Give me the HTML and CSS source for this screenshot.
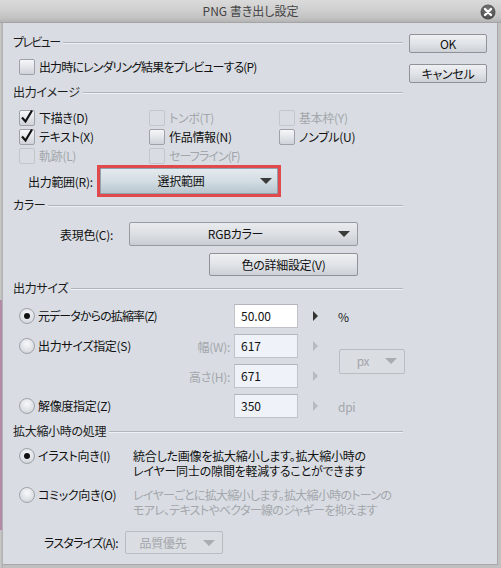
FILE: index.html
```html
<!DOCTYPE html>
<html lang="ja">
<head>
<meta charset="utf-8">
<title>PNG 書き出し設定</title>
<link rel="stylesheet" href="styles.css">
</head>
<body>
<div class="desk-strip"></div>
<div class="window">
  <div class="titlebar">
    <span class="title">PNG 書き出し設定</span>
    <span class="close">
      <svg width="16" height="16" viewBox="0 0 16 16">
        <defs>
          <radialGradient id="closeFill" cx="50%" cy="35%" r="65%">
            <stop offset="0" stop-color="#7a7a7a"/>
            <stop offset="1" stop-color="#4a4a4a"/>
          </radialGradient>
        </defs>
        <circle cx="8" cy="8" r="7.5" fill="url(#closeFill)"/>
        <path d="M5 5 L11 11 M11 5 L5 11" stroke="#fff" stroke-width="2.4" stroke-linecap="round"/>
      </svg>
    </span>
  </div>

  <div class="client">
    <div class="form">
      <div class="group-head tight-head"><span>プレビュー</span></div>
      <div class="check preview-row"><span class="box"></span><span class="narrow">出力時にレンダリング結果をプレビューする(P)</span></div>

      <div class="group-head gap-7"><span>出力イメージ</span></div>
      <div class="check-grid">
        <div class="check"><span class="box checked"><svg width="16" height="16" viewBox="0 0 16 16"><path d="M3 8.5 L6.5 12.5 L13 1.5" fill="none" stroke="#111" stroke-width="2.2"/></svg></span><span>下描き(D)</span></div>
        <div class="check disabled"><span class="box"></span><span>トンボ(T)</span></div>
        <div class="check disabled"><span class="box"></span><span>基本枠(Y)</span></div>
        <div class="check"><span class="box checked"><svg width="16" height="16" viewBox="0 0 16 16"><path d="M3 8.5 L6.5 12.5 L13 1.5" fill="none" stroke="#111" stroke-width="2.2"/></svg></span><span>テキスト(X)</span></div>
        <div class="check"><span class="box"></span><span>作品情報(N)</span></div>
        <div class="check"><span class="box"></span><span>ノンブル(U)</span></div>
        <div class="check disabled"><span class="box"></span><span>軌跡(L)</span></div>
        <div class="check disabled"><span class="box"></span><span class="narrow">セーフライン(F)</span></div>
      </div>

      <div class="range-row">
        <span class="range-label">出力範囲(R):</span>
        <div class="focus-ring">
          <div class="select focused"><span class="select-text">選択範囲</span><span class="arrow-down"></span></div>
        </div>
      </div>

      <div class="group-head"><span>カラー</span></div>
      <div class="color-row">
        <span class="color-label">表現色(C):</span>
        <div class="select color-select"><span class="select-text">RGBカラー</span><span class="arrow-down"></span></div>
      </div>
      <div class="btn detail-btn">色の詳細設定(V)</div>

      <div class="group-head gap-4"><span>出力サイズ</span></div>
      <div class="size-grid">
        <div class="radio"><span class="dot checked"></span><span class="narrow">元データからの拡縮率(Z)</span></div>
        <span class="field-label"></span>
        <div class="num">50.00</div>
        <span class="spin"><span class="arrow-right"></span></span>
        <span class="unit">%</span>

        <div class="radio"><span class="dot"></span><span>出力サイズ指定(S)</span></div>
        <span class="field-label">幅(W):</span>
        <div class="num disabled">617</div>
        <span class="spin off"><span class="arrow-right"></span></span>
        <div class="select disabled unit-select"><span class="select-text">px</span><span class="arrow-down"></span></div>

        <span class="radio-empty"></span>
        <span class="field-label">高さ(H):</span>
        <div class="num disabled">671</div>
        <span class="spin off"><span class="arrow-right"></span></span>

        <div class="radio"><span class="dot"></span><span>解像度指定(Z)</span></div>
        <span class="field-label"></span>
        <div class="num disabled">350</div>
        <span class="spin off"><span class="arrow-right"></span></span>
        <span class="unit muted">dpi</span>
      </div>

      <div class="group-head gap-5"><span>拡大縮小時の処理</span></div>
      <div class="scale-grid">
        <div class="radio"><span class="dot checked"></span><span>イラスト向き(I)</span></div>
        <p class="desc">統合した画像を拡大縮小します。拡大縮小時の<br>レイヤー同士の隙間を軽減することができます</p>
        <div class="radio"><span class="dot"></span><span>コミック向き(O)</span></div>
        <p class="desc muted">レイヤーごとに拡大縮小します。拡大縮小時のトーンの<br>モアレ、テキストやベクター線のジャギーを抑えます</p>
      </div>

      <div class="raster-row">
        <span class="raster-label">ラスタライズ(A):</span>
        <div class="select disabled raster-select"><span class="select-text">品質優先</span><span class="arrow-down"></span></div>
      </div>
    </div>

    <div class="actions">
      <div class="btn action-btn">OK</div>
      <div class="btn action-btn">キャンセル</div>
    </div>
  </div>
</div>
</body>
</html>
```

FILE: styles.css
```css
* {
  box-sizing: border-box;
}

html, body {
  margin: 0;
  padding: 0;
}

body {
  position: relative;
  width: 501px;
  height: 568px;
  overflow: hidden;
  font-family: "Noto Sans CJK JP", "Noto Sans", sans-serif;
  font-size: 12px;
  font-feature-settings: "palt";
  letter-spacing: -0.3px;
  color: #111;
  background: #b8b8b8;
}

/* sliver of the desktop showing past the left frame edge */
.desk-strip {
  position: absolute;
  left: 0;
  top: 300px;
  width: 2px;
  height: 230px;
  z-index: 2;
  background: #b38aa6;
}

/* window frame */
.window {
  display: flex;
  flex-direction: column;
  height: 568px;
  background: linear-gradient(90deg, #c9c9c9 0, #b9b9b9 2px, #a9a9a9 3px, #c0c0c0 3px);
}

.titlebar {
  position: relative;
  height: 23px;
  flex: none;
  display: flex;
  align-items: center;
  justify-content: center;
  background: linear-gradient(#dadada 0%, #cfcfcf 45%, #c3c3c3 80%, #b4b4b4 100%);
  border-bottom: 1px solid #a4a4a4;
}

.title {
  color: #444;
  line-height: 16px;
  letter-spacing: 0;
}

.close {
  position: absolute;
  right: 5px;
  top: 4px;
  width: 16px;
  height: 16px;
}

.close svg {
  display: block;
}

.client {
  flex: 1;
  display: flex;
  margin: 0 3px 3px 3px;
  padding: 11px 0 0 10px;
  background: #d9dde3;
  border-right: 1px solid #a8a8a8;
  border-bottom: 1px solid #a8a8a8;
}

.form {
  width: 390px;
  flex: none;
}

.actions {
  margin-left: 6px;
  width: 78px;
  display: flex;
  flex-direction: column;
  gap: 11px;
}

/* group headings with a rule to the right */
.group-head {
  display: flex;
  align-items: center;
  height: 16px;
  line-height: 16px;
  color: #1a1a1a;
}

.group-head::after {
  content: "";
  flex: 1;
  height: 1px;
  margin-left: 3px;
  background: #b0b5bc;
  box-shadow: 0 1px 0 #eef0f3;
}

.tight-head span {
  letter-spacing: -1.6px;
}

.narrow {
  letter-spacing: -0.9px;
}

.gap-4 { margin-top: 4px; }
.gap-5 { margin-top: 5px; }
.gap-7 { margin-top: 7px; }

/* checkboxes */
.check {
  display: flex;
  align-items: center;
  gap: 4px;
  white-space: nowrap;
  line-height: 16px;
}

.box {
  position: relative;
  width: 16px;
  height: 16px;
  flex: none;
  border: 1px solid #9ea2a8;
  border-radius: 2px;
  background: linear-gradient(#f6f7f9, #cfd3d9);
}

.box svg {
  position: absolute;
  left: -1px;
  top: -2px;
  overflow: visible;
}

.check.disabled {
  color: #a3a6ab;
}

.check.disabled .box {
  border-color: #c3c6cb;
  background: transparent;
}

.preview-row {
  margin-top: 7px;
  margin-left: 6px;
  height: 20px;
}

.check-grid {
  margin-top: 8px;
  margin-left: 6px;
  display: grid;
  grid-template-columns: 130px 130px 130px;
  grid-auto-rows: 19px;
}

/* dropdowns */
.select {
  position: relative;
  display: flex;
  align-items: center;
  justify-content: center;
  padding-right: 16px;
  border: 1px solid #979ba1;
  border-radius: 2px;
  background: linear-gradient(#e9ebee 0%, #dcdfe3 50%, #c9cdd3 100%);
  line-height: 16px;
  white-space: nowrap;
}

.arrow-down {
  position: absolute;
  right: 7px;
  top: 50%;
  margin-top: -3px;
  width: 0;
  height: 0;
  border-left: 6px solid transparent;
  border-right: 6px solid transparent;
  border-top: 6px solid #3a3a3a;
}

.select.disabled {
  border-color: #b9bcc1;
  background: #dadde2;
  color: #a3a6ab;
}

.select.disabled .arrow-down {
  border-top-color: #a9acb1;
}

.range-row {
  display: flex;
  align-items: center;
  height: 32px;
  padding-left: 15px;
}

.range-label {
  width: 69px;
  flex: none;
  white-space: nowrap;
}

.focus-ring {
  width: 184px;
  height: 32px;
  padding: 3px;
  background: #e04a4d;
}

.select.focused {
  height: 26px;
  border-color: #8fa3ad;
  border-radius: 1px;
  background: linear-gradient(#e4eaee 0%, #d3dde3 50%, #b9c6ce 100%);
}

.select.focused .arrow-down {
  right: 5px;
}

.color-row {
  display: flex;
  align-items: center;
  margin-top: 9px;
  height: 24px;
  padding-left: 47px;
}

.color-label {
  width: 69px;
  flex: none;
  white-space: nowrap;
}

.color-select {
  width: 229px;
  height: 24px;
}

/* push buttons */
.btn {
  display: flex;
  align-items: center;
  justify-content: center;
  border: 1px solid #8f9399;
  border-radius: 2px;
  background: linear-gradient(#eef0f2 0%, #e0e3e7 50%, #cdd1d6 100%);
  line-height: 16px;
  white-space: nowrap;
}

.detail-btn {
  margin-top: 7px;
  margin-left: 196px;
  width: 149px;
  height: 23px;
}

.action-btn {
  width: 78px;
  height: 19px;
}

/* radio buttons */
.radio {
  display: flex;
  align-items: center;
  gap: 3px;
  white-space: nowrap;
  line-height: 16px;
}

.dot {
  position: relative;
  width: 16px;
  height: 16px;
  flex: none;
  border: 1px solid #a0a4aa;
  border-radius: 50%;
  background: radial-gradient(circle at 50% 35%, #f7f8fa 0%, #dfe2e6 55%, #c6cad0 100%);
}

.dot.checked::after {
  content: "";
  position: absolute;
  left: 4px;
  top: 4px;
  width: 6px;
  height: 6px;
  border-radius: 50%;
  background: #111;
}

/* output size table */
.size-grid {
  margin-top: 8px;
  margin-left: 6px;
  display: grid;
  grid-template-columns: 165px 50px 64px 40px 66px;
  grid-template-rows: repeat(4, 24px);
  row-gap: 6px;
  align-items: center;
}

.field-label {
  text-align: right;
  padding-right: 4px;
  color: #a3a6ab;
  white-space: nowrap;
}

.num {
  height: 24px;
  padding-left: 6px;
  line-height: 22px;
  border: 1px solid #c0c4ca;
  border-top-color: #b2b6bc;
  background: #fff;
  color: #111;
  letter-spacing: 0;
}

.num.disabled {
  background: #eff3f9;
}

.spin {
  padding-left: 15px;
  display: flex;
  align-items: center;
}

.arrow-right {
  width: 0;
  height: 0;
  border-top: 5px solid transparent;
  border-bottom: 5px solid transparent;
  border-left: 5px solid #333;
}

.spin.off .arrow-right {
  border-left-color: #b7bbc0;
}

.unit {
  color: #222;
}

.muted {
  color: #a3a6ab;
}

.unit-select {
  grid-column: 5;
  grid-row: 2 / 4;
  width: 66px;
  height: 25px;
  padding-right: 18px;
  margin-left: 1px;
}

/* scaling options */
.scale-grid {
  margin-top: 9px;
  margin-left: 6px;
  display: grid;
  grid-template-columns: 114px auto;
  grid-template-rows: 30px 30px;
  row-gap: 9px;
  align-items: start;
}

.scale-grid .radio {
  height: 16px;
}

.desc {
  margin: 0;
  line-height: 15px;
  white-space: nowrap;
  letter-spacing: -0.2px;
}

.desc.muted {
  letter-spacing: -0.7px;
}

.raster-row {
  display: flex;
  align-items: center;
  margin-top: 14px;
  height: 23px;
  padding-left: 31px;
}

.raster-label {
  width: 81px;
  flex: none;
  white-space: nowrap;
  letter-spacing: -0.8px;
}

.raster-select {
  width: 98px;
  height: 23px;
  padding-right: 22px;
}
```
